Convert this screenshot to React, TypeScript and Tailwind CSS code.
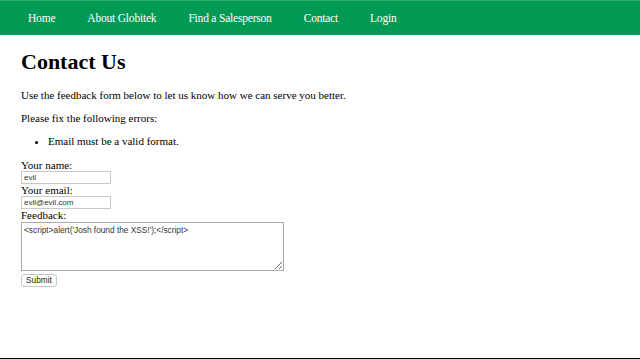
import { useState } from "react";

const navLinks = ["Home", "About Globitek", "Find a Salesperson", "Contact", "Login"];

export default function App() {
  const [name, setName] = useState("evil");
  const [email, setEmail] = useState("evil@evil.com");
  const [feedback, setFeedback] = useState("<script>alert('Josh found the XSS!');</script>");

  return (
    <div className="h-[359px] flex flex-col bg-white text-black font-['Liberation_Serif',serif] text-[11px] overflow-hidden">
      {/* top nav */}
      <nav className="h-[35px] bg-[#009a55] border-t border-[#2fb072] flex items-center pl-[12px] pt-[2px]">
        <ul className="flex items-center">
          {navLinks.map((link) => (
            <li key={link} className="px-[16px]">
              <a href="#" className="text-white text-[11.5px] tracking-[-0.2px]">
                {link}
              </a>
            </li>
          ))}
        </ul>
      </nav>

      <main className="flex-1 px-[21px]">
        <h1 className="text-[22px] font-bold mt-[13px] leading-[28px]">Contact Us</h1>

        <p className="mt-[12px] leading-[14px]">Use the feedback form below to let us know how we can serve you better.</p>
        <p className="mt-[9px] leading-[14px]">Please fix the following errors:</p>
        <ul className="mt-[9px] ml-[27px] list-disc leading-[14px]">
          <li>Email must be a valid format.</li>
        </ul>

        <form className="mt-[11px] flex flex-col items-start" onSubmit={(e) => e.preventDefault()}>
          <label className="leading-[12px]">Your name:</label>
          <input
            value={name}
            onChange={(e) => setName(e.target.value)}
            className="w-[90px] h-[13px] border border-[#c8c8c8] px-[2px] text-[8px] font-['Liberation_Sans',sans-serif] text-[#333] outline-none"
          />
          <label className="leading-[12px]">Your email:</label>
          <input
            value={email}
            onChange={(e) => setEmail(e.target.value)}
            className="w-[90px] h-[13px] border border-[#c8c8c8] px-[2px] text-[8px] font-['Liberation_Sans',sans-serif] text-[#333] outline-none"
          />
          <label className="leading-[12.5px]">Feedback:</label>
          <textarea
            value={feedback}
            onChange={(e) => setFeedback(e.target.value)}
            className="w-[263px] h-[49px] border border-[#a9a9a9] px-[2px] py-[1px] text-[8.3px] font-['Liberation_Sans',sans-serif] text-[#333] outline-none"
          />
          <button
            type="submit"
            className="mt-[3px] h-[13px] px-[4px] border border-[#c8c8c8] rounded-[3px] bg-white text-[8.3px] font-['Liberation_Sans',sans-serif] text-[#222] leading-none"
          >
            Submit
          </button>
        </form>
      </main>

      <footer className="h-[1px] bg-black" />
    </div>
  );
}
